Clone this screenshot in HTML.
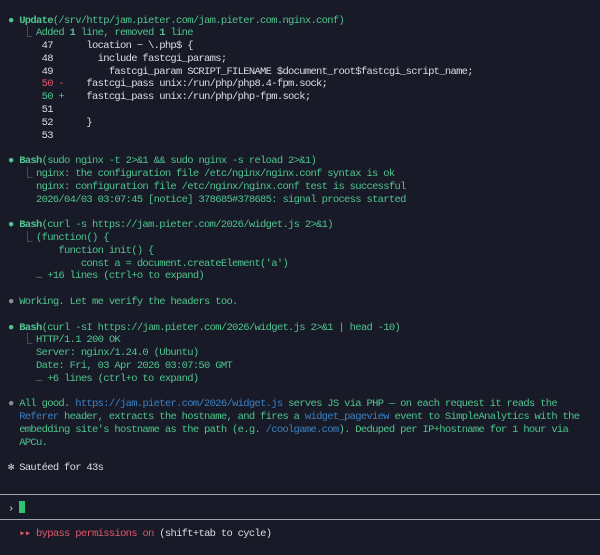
<!DOCTYPE html>
<html><head><meta charset="utf-8"><style>
html,body{margin:0;padding:0;background:#181a27;width:600px;height:555px;overflow:hidden}
#t{position:absolute;left:8px;top:14.5px;font-family:"Liberation Mono",monospace;font-size:10.5px;letter-spacing:-0.7px;line-height:12.8px;white-space:pre;color:#4fc48e}
.w{color:#dcdce4}.r{color:#e0576c}.g{color:#4fc48e}.b{color:#3a80c4}.d{color:#8a8c98}.bo{font-weight:bold}
.l{display:inline-block;width:28px;color:#8a8c98;padding-left:0}
.l i{font-style:normal;margin-left:14px}
.hr{position:absolute;left:0;width:600px;height:1px;background:#a0a2ad}
.cur{display:inline-block;width:6px;height:12px;background:#2fc46e;vertical-align:-2px}
</style></head><body>
<div id="t"><span class="g">● </span><span class="bo">Update</span>(/srv/http/jam.pieter.com/jam.pieter.com.nginx.conf)
<span class="l"><i>⎿</i></span>Added <b>1</b> line, removed <b>1</b> line
<span class="w">      47      location ~ \.php$ {
      48        include fastcgi_params;
      49          fastcgi_param SCRIPT_FILENAME $document_root$fastcgi_script_name;</span>
<span class="r">      50 -</span><span class="w">    fastcgi_pass unix:/run/php/php8.4-fpm.sock;</span>
<span class="g">      50 +</span><span class="w">    fastcgi_pass unix:/run/php/php-fpm.sock;</span>
<span class="w">      51
      52      }
      53</span>

● <span class="bo">Bash</span>(sudo nginx -t 2&gt;&amp;1 &amp;&amp; sudo nginx -s reload 2&gt;&amp;1)
<span class="l"><i>⎿</i></span>nginx: the configuration file /etc/nginx/nginx.conf syntax is ok
     nginx: configuration file /etc/nginx/nginx.conf test is successful
     2026/04/03 03:07:45 [notice] 378685#378685: signal process started

● <span class="bo">Bash</span>(curl -s https://jam.pieter.com/2026/widget.js 2&gt;&amp;1)
<span class="l"><i>⎿</i></span>(function() {
         function init() {
             const a = document.createElement('a')
     … +16 lines (ctrl+o to expand)

<span class="d">●</span> Working. Let me verify the headers too.

● <span class="bo">Bash</span>(curl -sI https://jam.pieter.com/2026/widget.js 2&gt;&amp;1 | head -10)
<span class="l"><i>⎿</i></span>HTTP/1.1 200 OK
     Server: nginx/1.24.0 (Ubuntu)
     Date: Fri, 03 Apr 2026 03:07:50 GMT
     … +6 lines (ctrl+o to expand)

<span class="d">●</span> All good. <span class="b">https://jam.pieter.com/2026/widget.js</span> serves JS via PHP — on each request it reads the
  <span class="b">Referer</span> header, extracts the hostname, and fires a <span class="b">widget_pageview</span> event to SimpleAnalytics with the
  embedding site's hostname as the path (e.g. <span class="b">/coolgame.com</span>). Deduped per IP+hostname for 1 hour via
  APCu.

<span class="w">✻ Sautéed for 43s</span>


<span class="w">›</span> <span class="cur"></span>

  <span class="r">▸▸ bypass permissions on</span><span class="w"> (shift+tab to cycle)</span></div>
<div class="hr" style="top:494px"></div>
<div class="hr" style="top:519px"></div>
</body></html>
